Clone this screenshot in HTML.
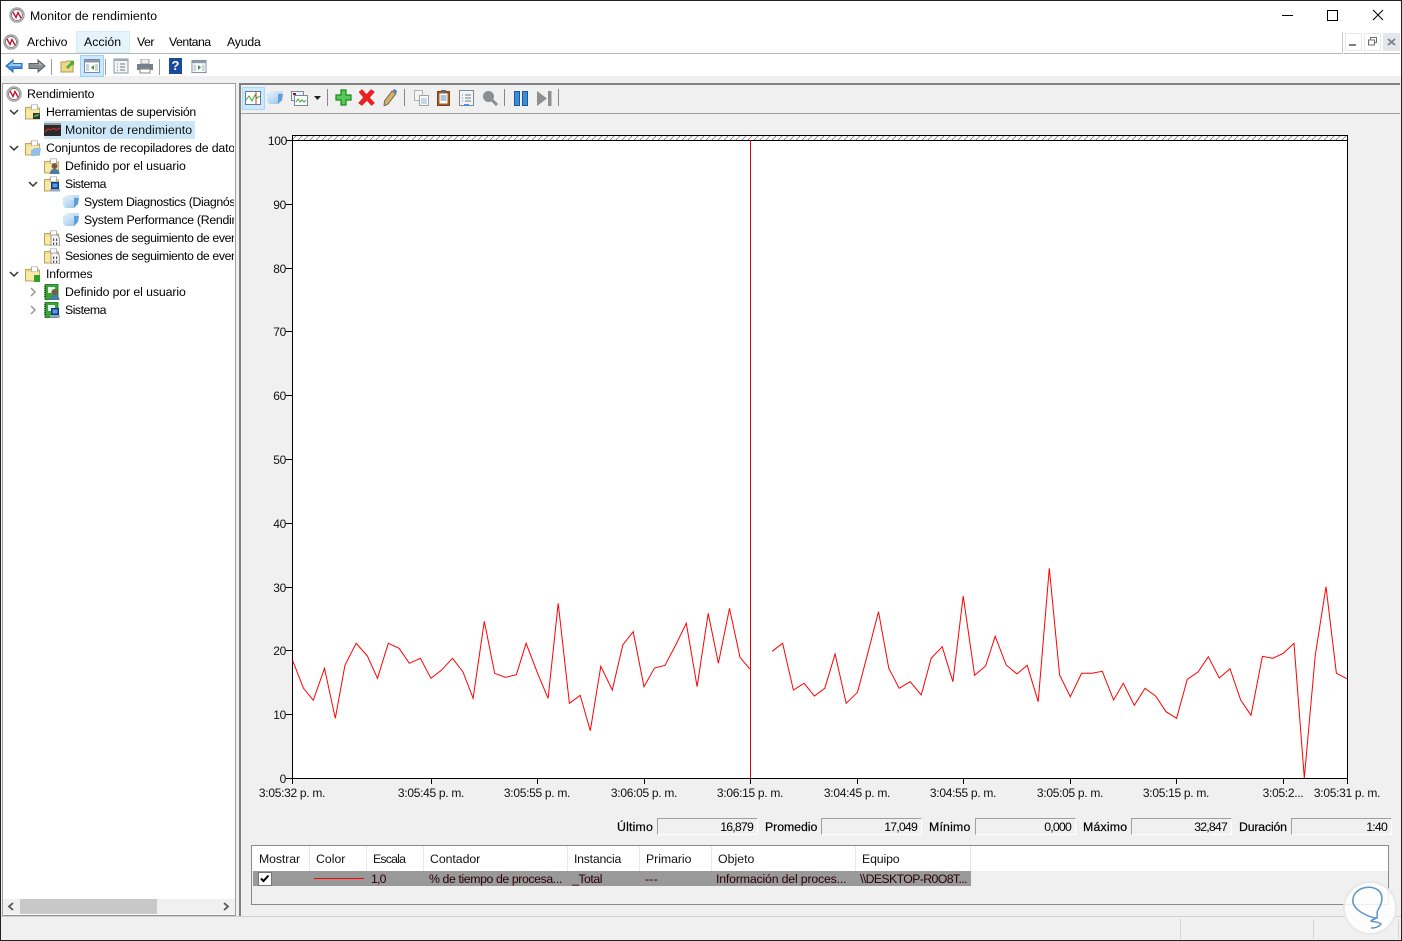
<!DOCTYPE html>
<html lang="es"><head><meta charset="utf-8"><title>Monitor de rendimiento</title>
<style>
html,body{margin:0;padding:0;background:#f0f0f0}
body{width:1402px;height:941px;position:relative;overflow:hidden;font-family:"Liberation Sans",sans-serif;font-size:12.3px;letter-spacing:0;color:#000}
.a,.t,svg.i{position:absolute}
.t{white-space:nowrap;line-height:14px}
.r{text-align:right;letter-spacing:-.8px}
.l{-webkit-text-stroke:.2px #000}
.box{position:absolute;top:818px;height:15px;border:1px solid;border-color:#a0a0a0 #fff #fff #a0a0a0;box-sizing:content-box}
.h{color:#111}
.g{color:#2a0008}
</style></head><body>
<svg width="0" height="0" style="position:absolute"><defs>
<linearGradient id="cg" x1="0" y1="0" x2="1" y2="1"><stop offset="0" stop-color="#eef6fc"/><stop offset="1" stop-color="#8fc0e8"/></linearGradient>
<symbol id="perf" viewBox="0 0 16 16"><circle cx="8" cy="8" r="7" fill="#fff" stroke="#a0a0a0" stroke-width="1.400"/><circle cx="8" cy="8" r="5.500" fill="none" stroke="#555" stroke-width=".7"/><path d="M4 5l3 5.500L9 5.500l3 5.500" fill="none" stroke="#c8102e" stroke-width="1.400"/></symbol>
<symbol id="folder" viewBox="0 0 16 16"><path d="M.5 3.500h5l1-1.500h6v2h2v11H.5z" fill="#f6dd84" stroke="#a89048" stroke-width=".8"/><path d="M6.500 .8h6v5h-6z" fill="#fff" stroke="#a0a0a0" stroke-width=".7"/><path d="M1.200 6h13v8.300h-13z" fill="#f9e9a4"/></symbol>
<symbol id="cube" viewBox="0 0 16 13"><path d="M0 3 4 0h12l-1 9-4 4H2L0 10z" fill="url(#cg)"/><path d="M11 3h5l-1 6-4 4z" fill="#5f9fd8"/><path d="M0 3h11v2H0z" fill="#cfe4f6"/></symbol>
<symbol id="rep" viewBox="0 0 16 16"><rect x="1" y="0.500" width="13" height="15" fill="#34a834" stroke="#1f661f" stroke-width=".8"/><rect x="4" y="3" width="7" height="6" fill="#e8f4e8"/><path d="M1 2v12" stroke="#222" stroke-width="1.400" stroke-dasharray="1 1"/></symbol>
<symbol id="user" viewBox="0 0 16 16"><circle cx="10.500" cy="8" r="3" fill="#7a5a44"/><path d="M6 16c0-4.500 2.500-5 4.500-5s5 .5 5 5z" fill="#4c7aa8"/></symbol>
<symbol id="sys" viewBox="0 0 16 16"><rect x="7" y="6" width="8" height="7" fill="#0a3c8c"/><rect x="8.500" y="7.500" width="5" height="4" fill="#5a9ae0"/><rect x="6" y="13" width="10" height="2.500" fill="#9aa8b8"/></symbol>
<symbol id="trace" viewBox="0 0 16 16"><path d="M7 5h6l2.500 2.500V16H7z" fill="#f4f4f4" stroke="#888" stroke-width=".8"/><path d="M9 8.500h1.200v2.500H9zM12 8.500h1.200v2.500H12zM9 12.500h1.200V15H9zM12 12.500h1.200V15H12z" fill="#555"/></symbol>
<symbol id="down" viewBox="0 0 10 10"><path d="M1 3l4 4 4-4" fill="none" stroke="#333" stroke-width="1.500"/></symbol>
<symbol id="right" viewBox="0 0 10 10"><path d="M3 1l4 4-4 4" fill="none" stroke="#999" stroke-width="1.500"/></symbol>
<symbol id="win" viewBox="0 0 16 16"><rect x=".5" y="1.500" width="15" height="13" fill="#fff" stroke="#7a8a98"/><rect x="1" y="2" width="14" height="2.500" fill="#8a98a8"/><rect x="2" y="6" width="3" height="7" fill="#c8d4e0"/><rect x="11" y="6" width="3" height="7" fill="#c8d4e0"/></symbol>
</defs></svg>

<!-- window frame -->
<div class="a" style="left:0;top:0;width:1402px;height:29px;background:#fff"></div>
<div class="a" style="left:0;top:29px;width:1402px;height:25px;background:#fff"></div>
<div class="a" style="left:0;top:53px;width:1343px;height:1px;background:#b8b8b8"></div>
<div class="a" style="left:1342px;top:32px;width:1px;height:22px;background:#c8c8c8"></div>
<div class="a" style="left:1344px;top:53px;width:56px;height:1px;background:#b8b8b8"></div>
<div class="a" style="left:0;top:54px;width:1402px;height:22px;background:#fff"></div>
<div class="a" style="left:0;top:76px;width:1402px;height:7px;background:#f0f0f0"></div>

<!-- title -->
<svg class="i" style="left:9px;top:7px" width="16" height="16"><use href="#perf"/></svg>
<span class="t" style="left:30px;top:9px;letter-spacing:.06px">Monitor de rendimiento</span>
<div class="a" style="left:1282px;top:15px;width:11px;height:1px;background:#000"></div>
<div class="a" style="left:1327px;top:10px;width:9px;height:9px;border:1px solid #000"></div>
<svg class="i" style="left:1372px;top:9px" width="12" height="12"><path d="M1 1l10 10M11 1 1 11" stroke="#000" stroke-width="1"/></svg>

<!-- menu -->
<svg class="i" style="left:3px;top:34px" width="16" height="16"><use href="#perf"/></svg>
<div class="a" style="left:76px;top:31px;width:52px;height:20px;background:#e5f3fb;border:1px solid #d8ecf8"></div>
<span class="t" style="left:27px;top:35px;letter-spacing:-.09px">Archivo</span>
<span class="t" style="left:84px;top:35px;letter-spacing:.03px">Acción</span>
<span class="t" style="left:137px;top:35px;letter-spacing:-.47px">Ver</span>
<span class="t" style="left:169px;top:35px;letter-spacing:-.5px">Ventana</span>
<span class="t" style="left:227px;top:35px;letter-spacing:-.2px">Ayuda</span>
<div class="a" style="left:1345px;top:33px;width:15px;height:16px;border:1px solid #e8e8e8"></div>
<div class="a" style="left:1349px;top:44px;width:7px;height:2px;background:#7a8088"></div>
<div class="a" style="left:1364px;top:33px;width:15px;height:16px;border:1px solid #e8e8e8"></div>
<svg class="i" style="left:1368px;top:37px" width="9" height="9"><path d="M2.500 2.500V.5h6v5h-2M.5 3h6v5h-6z" fill="none" stroke="#6a7078"/></svg>
<div class="a" style="left:1383px;top:33px;width:17px;height:18px;background:#e3e6ea"></div>
<svg class="i" style="left:1387px;top:38px" width="9" height="8"><path d="M1 1l7 6M8 1 1 7" stroke="#7a8088" stroke-width="1.800"/></svg>

<!-- top toolbar -->
<svg class="i" style="left:5px;top:58px" width="18" height="16"><path d="M1 8l7-6v3.500h9v5H8V14z" fill="#4a90d8" stroke="#2a68b0"/><path d="M3 8l5-4v2h8v2z" fill="#9cc8f0"/></svg>
<svg class="i" style="left:28px;top:58px" width="18" height="16"><path d="M17 8l-7-6v3.500H1v5h9V14z" fill="#8a8e92" stroke="#5c6064"/><path d="M3 6.500h8V4l4 3.500z" fill="#b0b4b8"/></svg>
<div class="a" style="left:51px;top:59px;width:1px;height:16px;background:#9a9a9a"></div>
<svg class="i" style="left:60px;top:58px" width="16" height="16"><path d="M1 4h5l1-1h6v11H1z" fill="#f0d68a" stroke="#b09a50"/><path d="M6 9l5-5-2-1h5v5l-1-2-5 5z" fill="#4caf3a"/></svg>
<div class="a" style="left:80px;top:55px;width:22px;height:20px;background:#cce8ff;border:1px solid #99d1ff"></div>
<svg class="i" style="left:84px;top:58px" width="16" height="16"><use href="#win"/><path d="M10 7v5L7 9.500z" fill="#2ea02e"/></svg>
<div class="a" style="left:105px;top:59px;width:1px;height:16px;background:#9a9a9a"></div>
<svg class="i" style="left:113px;top:58px" width="16" height="16"><rect x="1" y="1" width="14" height="14" fill="#f4f4f4" stroke="#8a98a8"/><rect x="1" y="1" width="14" height="2" fill="#9aa8b8"/><path d="M4 6h1M7 6h5M4 9h1M7 9h5M4 12h1M7 12h5" stroke="#6a7a8a"/></svg>
<svg class="i" style="left:137px;top:59px" width="16" height="15"><rect x="4" y="0" width="8" height="5" fill="#eee" stroke="#999"/><rect x="0" y="5" width="16" height="6" fill="#77808a"/><rect x="3" y="10" width="10" height="4" fill="#fff" stroke="#888"/></svg>
<div class="a" style="left:159px;top:59px;width:1px;height:16px;background:#9a9a9a"></div>
<div class="a" style="left:169px;top:58px;width:13px;height:16px;background:#1a4a9c;color:#fff;font-weight:bold;font-size:13px;line-height:16px;text-align:center;letter-spacing:0">?</div>
<svg class="i" style="left:191px;top:59px" width="16" height="15"><use href="#win"/><path d="M7 6v5l3-2.500z" fill="#2ea02e"/></svg>

<!-- left pane -->
<div class="a" style="left:2px;top:83px;width:232px;height:831px;background:#fff;border:1px solid #a0a0a0;border-bottom:2px solid #909090;box-sizing:content-box"></div>
<div class="a" style="left:44px;top:121px;width:151px;height:18px;background:#cce8f8"></div>
<div class="a" style="left:3px;top:83px;width:231px;height:830px;overflow:hidden">
<svg class="i" style="left:3px;top:3px" width="16" height="16"><use href="#perf"/></svg>
<span class="t" style="left:24px;top:4px;letter-spacing:-.16px">Rendimiento</span>
<svg class="i" style="left:6px;top:24px" width="10" height="10"><use href="#down"/></svg>
<svg class="i" style="left:22px;top:21px" width="16" height="16"><use href="#folder"/><rect x="8" y="9" width="7" height="6" fill="#2c3a2c"/><path d="M9 13l2-2 1 1 2-2" stroke="#6c6" fill="none"/></svg>
<span class="t" style="left:43px;top:22px;letter-spacing:-.24px">Herramientas de supervisión</span>
<svg class="i" style="left:41px;top:39px" width="17" height="15"><rect width="17" height="13" y="1" fill="#2a2a2a"/><rect y="1" width="17" height="2" fill="#999"/><path d="M1 10l3-3 3 1 3-2 2 2 4-2" stroke="#e03030" fill="none"/></svg>
<span class="t" style="left:62px;top:40px;color:#111;letter-spacing:.06px">Monitor de rendimiento</span>
<svg class="i" style="left:6px;top:60px" width="10" height="10"><use href="#down"/></svg>
<svg class="i" style="left:22px;top:57px" width="16" height="16"><use href="#folder"/><path d="M6 10l4-2h6l-1 6-4 2H6z" fill="#8fc0e8"/></svg>
<span class="t" style="left:43px;top:58px;letter-spacing:-.15px">Conjuntos de recopiladores de datos</span>
<svg class="i" style="left:41px;top:75px" width="16" height="16"><use href="#folder"/><use href="#user"/></svg>
<span class="t" style="left:62px;top:76px;letter-spacing:-.1px">Definido por el usuario</span>
<svg class="i" style="left:25px;top:96px" width="10" height="10"><use href="#down"/></svg>
<svg class="i" style="left:41px;top:93px" width="16" height="16"><use href="#folder"/><use href="#sys"/></svg>
<span class="t" style="left:62px;top:94px;letter-spacing:-.5px">Sistema</span>
<svg class="i" style="left:60px;top:112px" width="16" height="13"><use href="#cube"/></svg>
<span class="t" style="left:81px;top:112px;letter-spacing:-.35px">System Diagnostics (Diagnóstico)</span>
<svg class="i" style="left:60px;top:130px" width="16" height="13"><use href="#cube"/></svg>
<span class="t" style="left:81px;top:130px;letter-spacing:-.28px">System Performance (Rendimiento)</span>
<svg class="i" style="left:41px;top:147px" width="16" height="16"><use href="#folder"/><use href="#trace"/></svg>
<span class="t" style="left:62px;top:148px;letter-spacing:-.39px">Sesiones de seguimiento de eventos</span>
<svg class="i" style="left:41px;top:165px" width="16" height="16"><use href="#folder"/><use href="#trace"/></svg>
<span class="t" style="left:62px;top:166px;letter-spacing:-.39px">Sesiones de seguimiento de eventos</span>
<svg class="i" style="left:6px;top:186px" width="10" height="10"><use href="#down"/></svg>
<svg class="i" style="left:22px;top:183px" width="16" height="16"><use href="#folder"/><rect x="9" y="9" width="6" height="7" fill="#2ea02e"/></svg>
<span class="t" style="left:43px;top:184px;letter-spacing:-.17px">Informes</span>
<svg class="i" style="left:25px;top:204px" width="10" height="10"><use href="#right"/></svg>
<svg class="i" style="left:41px;top:201px" width="16" height="16"><use href="#rep"/><use href="#user"/></svg>
<span class="t" style="left:62px;top:202px;letter-spacing:-.1px">Definido por el usuario</span>
<svg class="i" style="left:25px;top:222px" width="10" height="10"><use href="#right"/></svg>
<svg class="i" style="left:41px;top:219px" width="16" height="16"><use href="#rep"/><use href="#sys"/></svg>
<span class="t" style="left:62px;top:220px;letter-spacing:-.5px">Sistema</span>
</div>
<!-- left scrollbar -->
<div class="a" style="left:3px;top:899px;width:232px;height:15px;background:#f0f0f0"></div>
<div class="a" style="left:20px;top:899px;width:137px;height:15px;background:#c8c8c8"></div>
<svg class="i" style="left:7px;top:902px" width="8" height="9"><path d="M6 1 2 4.500 6 8" fill="none" stroke="#555" stroke-width="1.800"/></svg>
<svg class="i" style="left:222px;top:902px" width="8" height="9"><path d="M2 1l4 3.500L2 8" fill="none" stroke="#555" stroke-width="1.800"/></svg>

<!-- right pane frame -->
<div class="a" style="left:239px;top:83px;width:2px;height:833px;background:#808080"></div>
<div class="a" style="left:239px;top:83px;width:1161px;height:2px;background:#808080"></div>
<div class="a" style="left:241px;top:113px;width:1159px;height:1px;background:#a0a0a0"></div>
<div class="a" style="left:0;top:916px;width:1402px;height:1px;background:#d0d0d0"></div>

<!-- graph toolbar -->
<div class="a" style="left:242px;top:87px;width:21px;height:21px;background:#cce8ff;border:1px solid #a8d8f8"></div>
<svg class="i" style="left:245px;top:91px" width="16" height="14"><rect x=".5" y=".5" width="15" height="13" fill="#fff" stroke="#6a7a8a"/><path d="M1 9l3-4 3 5 3-6 2 3 3-2" stroke="#38a838" fill="none"/><path d="M11 1v12" stroke="#d03030"/></svg>
<svg class="i" style="left:267px;top:91px" width="16" height="13"><use href="#cube"/></svg>
<svg class="i" style="left:291px;top:91px" width="17" height="15"><rect x=".5" y=".5" width="12" height="9" fill="#eef" stroke="#7a8a9a"/><rect x="3.500" y="4.500" width="13" height="10" fill="#fff" stroke="#7a8a9a"/><path d="M5 11l2-3 2 3 2-2 2 2 2-2" stroke="#38a838" fill="none"/><rect x="2" y="2" width="3" height="2" fill="#822"/></svg>
<svg class="i" style="left:313px;top:95px" width="9" height="6"><path d="M1 1h7L4.500 5z" fill="#222"/></svg>
<div class="a" style="left:327px;top:89px;width:1px;height:17px;background:#888"></div>
<svg class="i" style="left:335px;top:89px" width="17" height="17"><path d="M6 1h5v5h5v5h-5v5H6v-5H1V6h5z" fill="#58c858" stroke="#1a8a1a" stroke-width="1.200"/></svg>
<svg class="i" style="left:358px;top:89px" width="17" height="17"><path d="M1 3l3-2.500 4.500 5L13 .5l3.500 2.500-5 5.500 5 5.500-3 2.500-4.500-5L4 16.500l-3.500-2.500 5-5.500z" fill="#f02020" stroke="#c01010" stroke-width=".5"/></svg>
<svg class="i" style="left:383px;top:89px" width="14" height="17"><path d="M9 2l4 2.500-8 10.500-4 2 .5-5z" fill="#d8b068" stroke="#6a6a5a"/><path d="M9.500 1l2-1 2.500 2-1 2.500z" fill="#4a80c8"/></svg>
<div class="a" style="left:404px;top:89px;width:1px;height:17px;background:#888"></div>
<svg class="i" style="left:414px;top:90px" width="15" height="16"><rect x=".5" y=".5" width="8" height="10" fill="#f4f4f4" stroke="#b0b0b0"/><rect x="5.500" y="5.500" width="9" height="10" fill="#fff" stroke="#9aa4ae"/><path d="M7 9h6M7 11h6M7 13h6" stroke="#8ab0d8"/></svg>
<svg class="i" style="left:437px;top:90px" width="13" height="16"><rect x=".5" y="1.500" width="12" height="14" fill="#a85a20" stroke="#7a4010"/><rect x="2.500" y="3.500" width="8" height="10" fill="#fff"/><rect x="4" y="0" width="5" height="3" fill="#666"/><path d="M3.500 6h6M3.500 8h6M3.500 10h6" stroke="#5a8ac0"/></svg>
<svg class="i" style="left:459px;top:90px" width="15" height="16"><rect x=".5" y=".5" width="14" height="15" fill="#f4f4f4" stroke="#7a8a9a"/><path d="M3 5h1M6 5h6M3 8h1M6 8h6M3 11h1M6 11h6" stroke="#6a7a8a"/><rect x="5" y="14" width="5" height="2" fill="#4a90d8"/></svg>
<svg class="i" style="left:482px;top:90px" width="16" height="16"><circle cx="6.500" cy="6.500" r="5.500" fill="#8a8e92"/><path d="M10 10l5 5" stroke="#8a8e92" stroke-width="3"/></svg>
<div class="a" style="left:504px;top:89px;width:1px;height:17px;background:#888"></div>
<div class="a" style="left:514px;top:91px;width:4px;height:13px;background:#3a8fd8;border:1px solid #1a5a9c"></div>
<div class="a" style="left:522px;top:91px;width:4px;height:13px;background:#3a8fd8;border:1px solid #1a5a9c"></div>
<svg class="i" style="left:537px;top:91px" width="15" height="15"><path d="M0 0l10 7.500L0 15z" fill="#8f8f8f"/><rect x="11" y="0" width="3.500" height="15" fill="#8f8f8f"/></svg>
<div class="a" style="left:558px;top:89px;width:1px;height:17px;background:#888"></div>

<!-- chart -->
<svg class="i" style="left:241px;top:114px;letter-spacing:0" width="1159" height="700" viewBox="241 114 1159 700">
<defs><pattern id="hatch" width="6" height="6" patternUnits="userSpaceOnUse"><path d="M0 6 6 0" stroke="#777" stroke-width=".8"/></pattern></defs>
<rect x="292.500" y="135.500" width="1055" height="643" fill="#fff" stroke="#000"/>
<rect x="293" y="136" width="1054" height="4" fill="url(#hatch)"/>
<path d="M292 140.500H1347" stroke="#000"/>
<path d="M286 140.500h6M286 204.500h6M286 268.500h6M286 331.500h6M286 395.500h6M286 459.500h6M286 523.500h6M286 587.500h6M286 650.500h6M286 714.500h6M286 778.500h6M292.500 778v6M431.500 778v6M537.500 778v6M644.500 778v6M750.500 778v6M857.500 778v6M963.500 778v6M1070.500 778v6M1176.500 778v6M1283.500 778v6M1347.500 778v6" stroke="#000" fill="none"/>
<path d="M750.500 140V778" stroke="#e00000" stroke-width="1"/>
<polyline fill="none" stroke="#f00" stroke-width="1" points="292.700,660.700 303.500,688.300 313.300,700.300 324.500,668.300 335.300,718.300 345,665 356.200,643.300 367.400,656 377.500,678.300 388.300,643.300 399.100,648.300 409.300,663.300 420.400,658.300 430.900,678.300 441.400,670.300 452.500,658.300 463,672 473.100,698.300 484.300,621.300 494.700,673.300 505.500,677.300 516.400,674.700 526.100,643.300 537.600,673.300 548.100,698.300 558.200,603.300 569.400,703.300 580.200,695.300 590.300,730.700 600.800,666.300 612.300,690 622.800,645 633.200,631.700 644,686.700 654.500,668 665,665.300 675.700,645 686.300,623.300 697.100,686.700 708.200,613.300 718.400,663.300 729.500,608.300 740,657.300 749.800,669"/>
<polyline fill="none" stroke="#f00" stroke-width="1" points="772.100,651.300 782.600,643.300 793.400,690 804.200,683.300 814.300,696 824.800,688.300 835.100,654 846.200,703.300 857.500,692.300 867.800,653.300 878.500,611.700 888.800,668.300 899.200,688.300 910.200,681.700 921.200,695 931.200,658.300 942.200,646.700 952.900,681.700 963.200,596 974.600,675.300 985.600,666 995.200,636.300 1006.200,665 1016.900,674 1027.200,665.300 1038.200,701.700 1049.300,568.300 1059.600,675 1070.300,696.700 1081.600,673.300 1092,673.300 1102.300,671.300 1113.600,700 1123.300,683.300 1134.300,705.300 1145,688.300 1155.600,696 1166,711.700 1176.600,718.300 1187.300,679.300 1198,672 1208.300,656.700 1219.300,678 1230,668.700 1240.700,700 1251,715.300 1262.400,656.300 1272.700,658.300 1283.300,653.300 1294,643.300 1304.300,778 1315.300,655 1326,586.700 1336.400,673.300 1347,678.700"/>
<g font-family="Liberation Sans,sans-serif" font-size="12" fill="#111" text-anchor="end" letter-spacing="-.3">
<text x="287" y="145">100</text><text x="286" y="209">90</text><text x="286" y="273">80</text><text x="286" y="336">70</text><text x="286" y="400">60</text><text x="286" y="464">50</text><text x="286" y="528">40</text><text x="286" y="592">30</text><text x="286" y="655">20</text><text x="286" y="719">10</text><text x="286" y="783">0</text>
</g>
<g font-family="Liberation Sans,sans-serif" font-size="12" fill="#111" text-anchor="middle" letter-spacing="-.3">
<text x="292" y="797">3:05:32 p. m.</text><text x="431" y="797">3:05:45 p. m.</text><text x="537" y="797">3:05:55 p. m.</text><text x="644" y="797">3:06:05 p. m.</text><text x="750" y="797">3:06:15 p. m.</text><text x="857" y="797">3:04:45 p. m.</text><text x="963" y="797">3:04:55 p. m.</text><text x="1070" y="797">3:05:05 p. m.</text><text x="1176" y="797">3:05:15 p. m.</text><text x="1283" y="797">3:05:2...</text><text x="1347" y="797">3:05:31 p. m.</text>
</g>
</svg>

<!-- stats -->
<span class="t l" style="left:617px;top:820px;letter-spacing:.2px">Último</span>
<div class="box" style="left:657px;width:99px"></div><span class="t r" style="left:657px;width:96px;top:820px">16,879</span>
<span class="t l" style="left:765px;top:820px;letter-spacing:-.05px">Promedio</span>
<div class="box" style="left:821px;width:99px"></div><span class="t r" style="left:821px;width:96px;top:820px">17,049</span>
<span class="t l" style="left:929px;top:820px;letter-spacing:.2px">Mínimo</span>
<div class="box" style="left:975px;width:99px"></div><span class="t r" style="left:975px;width:96px;top:820px">0,000</span>
<span class="t l" style="left:1083px;top:820px;letter-spacing:.2px">Máximo</span>
<div class="box" style="left:1131px;width:99px"></div><span class="t r" style="left:1131px;width:96px;top:820px">32,847</span>
<span class="t l" style="left:1239px;top:820px;letter-spacing:-.17px">Duración</span>
<div class="box" style="left:1291px;width:99px"></div><span class="t r" style="left:1291px;width:96px;top:820px">1:40</span>

<!-- counter table -->
<div class="a" style="left:251px;top:845px;width:1136px;height:58px;border:1px solid #8a8a8a"></div>
<div class="a" style="left:252px;top:846px;width:1136px;height:25px;background:#fff"></div>
<div class="a" style="left:253px;top:871px;width:718px;height:15px;background:#999"></div>
<div class="a" style="left:309px;top:846px;width:1px;height:25px;background:#e8e8e8"></div>
<div class="a" style="left:366px;top:846px;width:1px;height:25px;background:#e8e8e8"></div>
<div class="a" style="left:423px;top:846px;width:1px;height:25px;background:#e8e8e8"></div>
<div class="a" style="left:567px;top:846px;width:1px;height:25px;background:#e8e8e8"></div>
<div class="a" style="left:639px;top:846px;width:1px;height:25px;background:#e8e8e8"></div>
<div class="a" style="left:711px;top:846px;width:1px;height:25px;background:#e8e8e8"></div>
<div class="a" style="left:855px;top:846px;width:1px;height:25px;background:#e8e8e8"></div>
<div class="a" style="left:970px;top:846px;width:1px;height:25px;background:#e8e8e8"></div>
<span class="t h" style="left:259px;top:852px;letter-spacing:-.1px">Mostrar</span>
<span class="t h" style="left:316px;top:852px">Color</span>
<span class="t h" style="left:373px;top:852px;letter-spacing:-.8px">Escala</span>
<span class="t h" style="left:430px;top:852px;letter-spacing:-.05px">Contador</span>
<span class="t h" style="left:574px;top:852px;letter-spacing:-.24px">Instancia</span>
<span class="t h" style="left:646px;top:852px;letter-spacing:-.05px">Primario</span>
<span class="t h" style="left:718px;top:852px;letter-spacing:.03px">Objeto</span>
<span class="t h" style="left:862px;top:852px;letter-spacing:-.13px">Equipo</span>
<div class="a" style="left:258px;top:872px;width:12px;height:12px;background:#fff;border:1px solid #777"></div>
<svg class="i" style="left:259px;top:873px" width="12" height="11"><path d="M2 5.500l2.500 2.500L9.500 2.500" fill="none" stroke="#000" stroke-width="2"/></svg>
<div class="a" style="left:314px;top:878px;width:50px;height:1px;background:#f00"></div>
<span class="t g" style="left:371px;top:872px;letter-spacing:-.8px">1,0</span>
<span class="t g" style="left:429px;top:872px;letter-spacing:-.4px">% de tiempo de procesa...</span>
<span class="t g" style="left:572px;top:872px;letter-spacing:-.47px">_Total</span>
<span class="t g" style="left:645px;top:872px;letter-spacing:.2px">---</span>
<span class="t g" style="left:716px;top:872px;letter-spacing:-.17px">Información del proces...</span>
<span class="t g" style="left:860px;top:872px;letter-spacing:-.62px">\\DESKTOP-R0O8T...</span>

<!-- status bar -->
<div class="a" style="left:1180px;top:919px;width:1px;height:20px;background:#d4d4d4"></div>
<div class="a" style="left:1313px;top:919px;width:1px;height:20px;background:#d4d4d4"></div>
<div class="a" style="left:1398px;top:919px;width:1px;height:20px;background:#d4d4d4"></div>

<!-- window border -->
<div class="a" style="left:0;top:0;width:1400px;height:939px;border:1px solid #222"></div>

<!-- watermark -->
<svg class="i" style="left:1342px;top:880px" width="56" height="56"><circle cx="28" cy="28" r="26" fill="#fff" fill-opacity=".85" stroke="#e8e8e8" stroke-width="2"/><path d="M11 19C12 8 28 4 36 10c7 6 3 15 0 20-2 3 0 5-1 8-6 0-16-5-20-9-3-3-5-6-4-10zM35 38c-2 1-6 2-6 3 3 1 9 1 10 3-2 3-6 4-10 4" fill="none" stroke="#5f93c4" stroke-width="1.500"/></svg>
</body></html>
